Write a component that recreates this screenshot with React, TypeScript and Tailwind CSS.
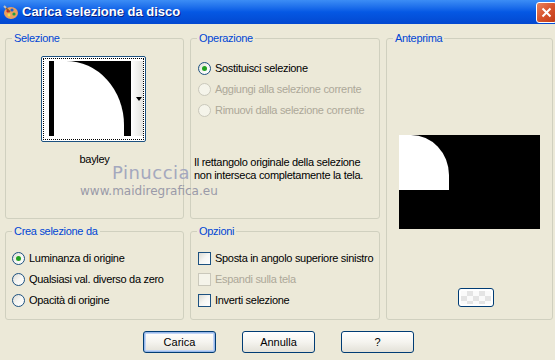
import React from "react";

/* ===============================
   XP CONTROLS
=============================== */
const font = "font-['Tahoma','Liberation_Sans',sans-serif]";

function Radio({ label, checked, disabled }: { label: string; checked?: boolean; disabled?: boolean }) {
  return (
    <div className="flex items-center h-[21px] whitespace-nowrap">
      <span
        className={`w-[13px] h-[13px] shrink-0 rounded-full border flex items-center justify-center ${
          disabled
            ? "border-[#CAC8BB] bg-[#F5F4EA]"
            : "border-[#1C5180] bg-gradient-to-br from-[#DCDBD4] via-[#F6F6F3] to-white"
        }`}
      >
        {checked && <span className="w-[5px] h-[5px] rounded-full bg-[#21A121]" />}
      </span>
      <span className={`ml-[4px] ${disabled ? "text-[#ACA899]" : "text-black"}`}>{label}</span>
    </div>
  );
}

function Check({ label, disabled }: { label: string; disabled?: boolean }) {
  return (
    <div className="flex items-center h-[21px] whitespace-nowrap">
      <span
        className={`w-[13px] h-[13px] shrink-0 border ${
          disabled
            ? "border-[#CAC8BB] bg-[#F5F4EA]"
            : "border-[#1C5180] bg-gradient-to-br from-[#DCDBD4] via-[#F6F6F3] to-white"
        }`}
      />
      <span className={`ml-[4px] ${disabled ? "text-[#ACA899]" : "text-black"}`}>{label}</span>
    </div>
  );
}

function Group({ title, className = "", children }: { title: string; className?: string; children?: React.ReactNode }) {
  return (
    <div className={`relative border border-[#D0D0BF] rounded-[3px] ${className}`}>
      <span className="absolute -top-[8px] left-[6px] px-[2px] bg-[#ECE9D8] text-[#0046D5] leading-[14px]">
        {title}
      </span>
      {children}
    </div>
  );
}

function XpButton({ label, focused }: { label: string; focused?: boolean }) {
  return (
    <button
      className={`w-[73px] h-[22px] rounded-[3px] border border-[#003C74] bg-gradient-to-b from-white via-[#F5F4EF] to-[#E3E1D8] text-black ${
        focused ? "shadow-[inset_0_0_0_1px_#98B8EA,inset_0_0_0_2px_#C0D4F4]" : ""
      }`}
    >
      {label}
    </button>
  );
}

export default function App() {
  return (
    <main className={`w-[555px] h-[360px] bg-[#ECE9D8] overflow-hidden relative text-[11px] tracking-[-0.3px] ${font}`}>
      {/* TITLE BAR */}
      <header className="h-[24px] flex items-center bg-gradient-to-b from-[#3C8DF5] via-[#0558E4] to-[#0348D0] pl-[3px] tracking-normal">
        <svg width="16" height="16" viewBox="0 0 16 16">
          <ellipse cx="8" cy="9" rx="7" ry="6" fill="#E8A060" />
          <circle cx="5" cy="7" r="1.6" fill="#D02020" />
          <circle cx="9" cy="6" r="1.6" fill="#2060D0" />
          <circle cx="11" cy="10" r="1.6" fill="#20A040" />
          <circle cx="6" cy="11" r="1.4" fill="#F0E040" />
          <path d="M2 3 L7 8" stroke="#8B5A2B" strokeWidth="1.6" />
          <path d="M1 2 L3 4" stroke="#C0C0C0" strokeWidth="2" />
        </svg>
        <span className="ml-[3px] text-white font-bold text-[13px] font-['Liberation_Sans',sans-serif] [text-shadow:1px_1px_0_#0A1E7E]">
          Carica selezione da disco
        </span>
        <div className="ml-auto mr-[-2px] w-[21px] h-[21px] rounded-[3px] border border-white bg-gradient-to-br from-[#E8815E] via-[#D7532C] to-[#C13A15] flex items-center justify-center">
          <svg width="11" height="11" viewBox="0 0 11 11">
            <path d="M1.5 1.5 L9.5 9.5 M9.5 1.5 L1.5 9.5" stroke="white" strokeWidth="2" />
          </svg>
        </div>
      </header>

      {/* BODY */}
      <div className="grid grid-cols-[179px_190px_167px] grid-rows-[181px_89px] gap-x-[6px] gap-y-[12px] pl-[5px] pt-[14px]">
        <Group title="Selezione">
          <div className="flex flex-col items-center pt-[17px]">
            <div className="w-[105px] h-[86px] -ml-[3px] rounded-[2px] border border-[#1C5180] p-[1px] bg-white">
              <div className="w-full h-full border border-dotted border-black flex pt-[2px] pb-[3px] pl-[5px]">
                <div className="w-[5px] bg-black" />
                <div className="flex-1 bg-black flex">
                  <div className="w-[70px] bg-white rounded-tr-[58px_64px]" />
                </div>
                <div className="w-[12px] bg-gradient-to-r from-white to-[#E4E4E0] flex items-center justify-end pr-[1px]">
                  <span className="w-0 h-0 border-l-[3px] border-r-[3px] border-t-[4px] border-l-transparent border-r-transparent border-t-black" />
                </div>
              </div>
            </div>
            <span className="mt-[9px] text-black">bayley</span>
          </div>
        </Group>

        <Group title="Operazione">
          <div className="pt-[19px] pl-[7px]">
            <Radio label="Sostituisci selezione" checked />
            <Radio label="Aggiungi alla selezione corrente" disabled />
            <Radio label="Rimuovi dalla selezione corrente" disabled />
            <p className="mt-[35px] -ml-[4px] leading-[13px] text-black">
              Il rettangolo originale della selezione
              <br />
              non interseca completamente la tela.
            </p>
          </div>
        </Group>

        <Group title="Anteprima" className="row-span-2">
          <div className="flex flex-col items-center h-full">
            <div className="mt-[96px] w-[141px] h-[94px] bg-black ml-[-1px]">
              <div className="w-[50px] h-[55px] bg-white rounded-tr-[38px_40px]" />
            </div>
            <div className="mt-[59px] ml-[12px] w-[36px] h-[19px] rounded-[3px] border border-[#003C74] bg-white p-[2px]">
              <div className="w-full h-full bg-[conic-gradient(#E4E4E4_25%,#FAFAFA_0_50%,#E4E4E4_0_75%,#FAFAFA_0)] bg-[length:12px_10px]" />
            </div>
          </div>
        </Group>

        <Group title="Crea selezione da">
          <div className="pt-[16px] pl-[6px]">
            <Radio label="Luminanza di origine" checked />
            <Radio label="Qualsiasi val. diverso da zero" />
            <Radio label="Opacità di origine" />
          </div>
        </Group>

        <Group title="Opzioni">
          <div className="pt-[16px] pl-[7px]">
            <Check label="Sposta in angolo superiore sinistro" />
            <Check label="Espandi sulla tela" disabled />
            <Check label="Inverti selezione" />
          </div>
        </Group>
      </div>

      {/* BUTTONS */}
      <div className="flex justify-center gap-[26px] mt-[11px] pl-[2px] tracking-normal">
        <XpButton label="Carica" focused />
        <XpButton label="Annulla" />
        <XpButton label="?" />
      </div>

      {/* WATERMARK */}
      <span className="absolute left-[112px] top-[163px] text-[18px] leading-[20px] tracking-[0.5px] text-[#A4A8BE] font-['DejaVu_Sans',sans-serif] pointer-events-none">
        Pinuccia
      </span>
      <span className="absolute left-[80px] top-[184px] text-[12px] leading-[14px] tracking-normal text-[#9A9AA8] font-['DejaVu_Sans',sans-serif] pointer-events-none">
        www.maidiregrafica.eu
      </span>
    </main>
  );
}
